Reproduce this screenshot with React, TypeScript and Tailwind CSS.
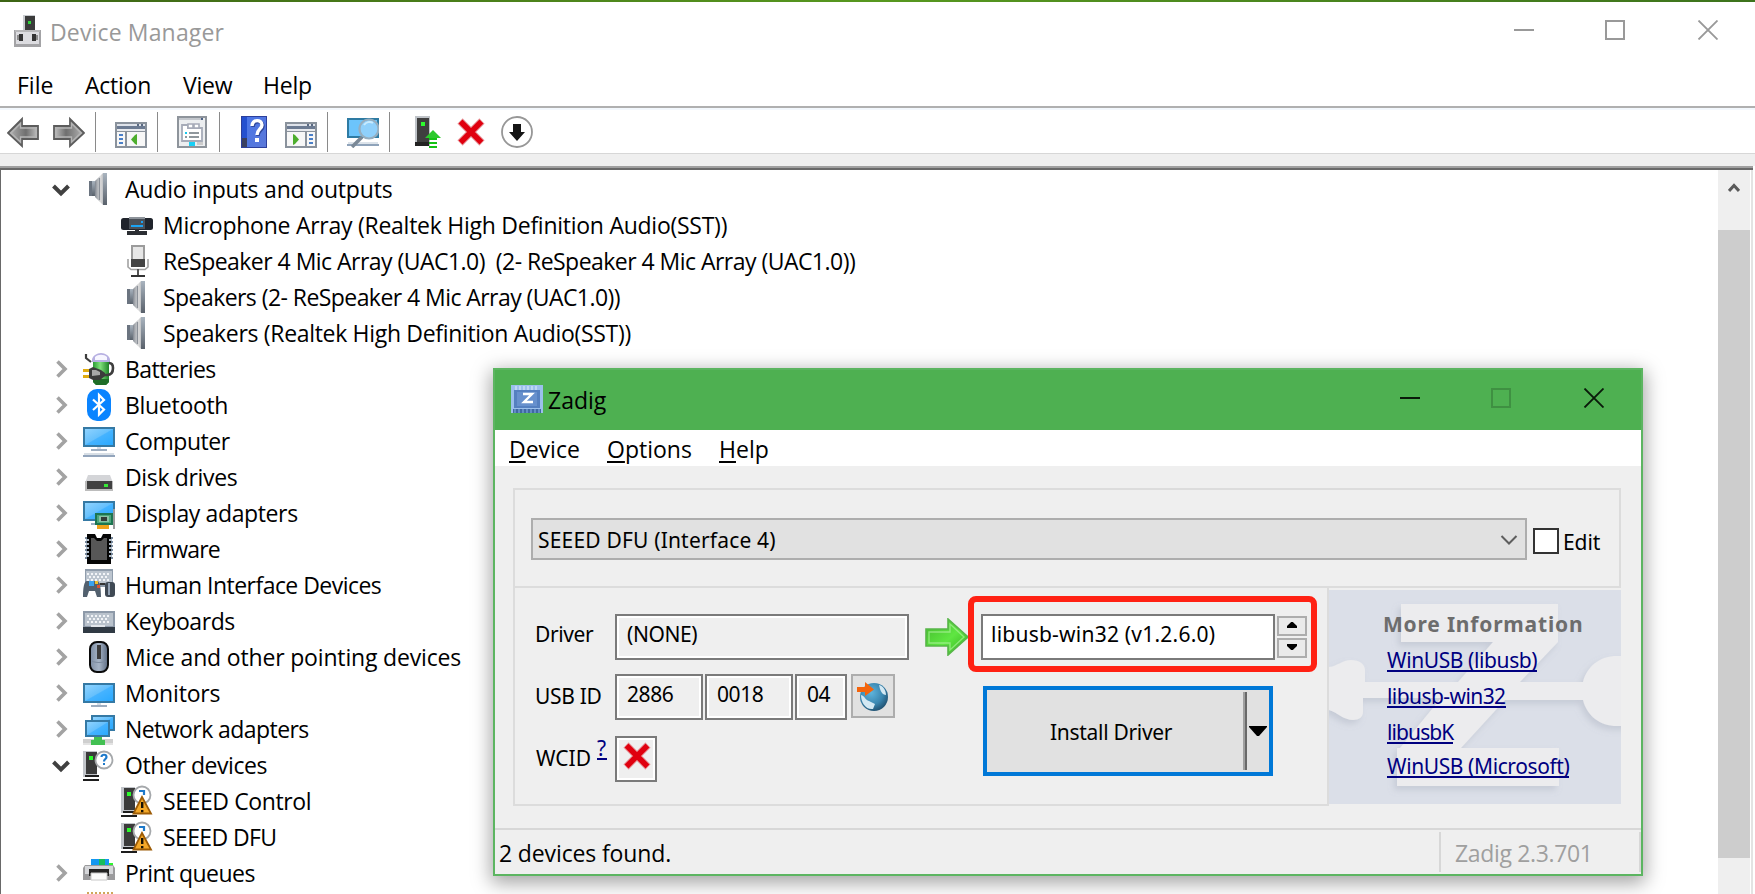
import type { ReactNode } from "react";

const Svg = ({ children, className = "h-8 w-8", box = "0 0 32 32" }: { children: ReactNode; className?: string; box?: string }) => (
  <svg viewBox={box} className={`block shrink-0 ${className}`}>{children}</svg>
);

const Defs = () => (
  <svg className="absolute h-0 w-0">
    <defs>
      <linearGradient id="screen" x1="0" y1="0" x2="1" y2="1">
        <stop offset="0" stopColor="#8fd3ff" /><stop offset=".48" stopColor="#66c0fc" /><stop offset=".52" stopColor="#45b3ff" /><stop offset="1" stopColor="#2aa9ff" />
      </linearGradient>
      <linearGradient id="gray" x1="0" y1="0" x2="1" y2="0">
        <stop offset="0" stopColor="#b5b5b5" /><stop offset=".6" stopColor="#6f6f6f" /><stop offset="1" stopColor="#c4c4c4" />
      </linearGradient>
      <linearGradient id="cone" x1="0" y1="0" x2="1" y2="0">
        <stop offset="0" stopColor="#8b9199" /><stop offset=".55" stopColor="#dcdcdc" /><stop offset="1" stopColor="#a9adb2" />
      </linearGradient>
      <linearGradient id="cap" x1="0" y1="0" x2="0" y2="1">
        <stop offset="0" stopColor="#a9b4bf" /><stop offset="1" stopColor="#59616b" />
      </linearGradient>
      <linearGradient id="help" x1="0" y1="0" x2="1" y2="1">
        <stop offset="0" stopColor="#4a76e8" /><stop offset="1" stopColor="#5b78d8" />
      </linearGradient>
      <linearGradient id="mouse" x1="0" y1="0" x2="1" y2="0">
        <stop offset="0" stopColor="#7d8da3" /><stop offset=".5" stopColor="#a6b4c6" /><stop offset="1" stopColor="#5b6a80" />
      </linearGradient>
      <linearGradient id="greenArrow" x1="0" y1="0" x2="1" y2="1">
        <stop offset="0" stopColor="#42b82b" /><stop offset=".55" stopColor="#5fe642" /><stop offset="1" stopColor="#2fae1a" />
      </linearGradient>
      <linearGradient id="battery" x1="0" y1="0" x2="1" y2="0">
        <stop offset="0" stopColor="#2c9c35" /><stop offset=".45" stopColor="#7fe07a" /><stop offset="1" stopColor="#1d8327" />
      </linearGradient>
      <radialGradient id="globe" cx=".4" cy=".35" r=".7">
        <stop offset="0" stopColor="#5fb4dc" /><stop offset=".6" stopColor="#3a86b0" /><stop offset="1" stopColor="#1f4d6c" />
      </radialGradient>
    </defs>
  </svg>
);

const RedX = ({ className = "h-8 w-8" }: { className?: string }) => (
  <Svg className={className}>
    <path d="M5 5 27 27M27 5 5 27" stroke="#e7a0a4" strokeWidth="7.5" />
    <path d="M5.5 5.5 26.5 26.5M26.5 5.5 5.5 26.5" stroke="#e0000f" strokeWidth="5.6" />
  </Svg>
);

const DeviceManagerIcon = () => (
  <Svg>
    <path d="M12 0h12v15H12z" fill="#c9ccd0" /><path d="M14 1h10v14H14z" fill="#3b3b3b" /><path d="M17 6h3v3h-3z" fill="#2fd33a" />
    <path d="M3 15h27v17H3z" fill="#a3a3a6" /><path d="M5 17h23v12H5z" fill="#dcdce0" /><path d="M4 15h25v2H4z" fill="#b7b7b9" />
    <path d="M8 19h4v7H8zM21 19h4v7h-4z" fill="#333" /><path d="M6 20h2v5H6zM25 20h2v5h-2z" fill="#8c8c8c" />
  </Svg>
);

const ArrowIcon = ({ flip = false }: { flip?: boolean }) => (
  <Svg>
    <g transform={flip ? "translate(32 0) scale(-1 1)" : undefined}>
      <path d="M1 17 15 3v7h16v13H15v7Z" fill="url(#gray)" stroke="#5c5c5c" strokeWidth="1.8" />
      <path d="M4 17 13.500 7.500V12H29v9H13.500v5Z" fill="none" stroke="#b4b4b4" strokeWidth="1.400" />
    </g>
  </Svg>
);

const PaneIcon = ({ right = false }: { right?: boolean }) => (
  <Svg>
    <path d="M0 6h32v26H0z" fill="#8a929c" /><path d="M2 8h28v2H2z" fill="#dfe3ea" /><path d="M2 10h28v3H2z" fill="#6c7b92" />
    <path d="M22 8h2v2h-2zM26 8h2v2h-2z" fill="#5a6a82" /><path d="M2 13h28v3H2z" fill="#e8eaee" /><path d="M2 16h28v14H2z" fill="#f7f7f7" />
    {right ? (
      <>
        <path d="M20 15h2v15h-2z" fill="#8a929c" /><path d="M2 15h28v1H2z" fill="#8a929c" />
        <path d="M24 18h4v2h-4zM24 22h4v2h-4zM24 26h4v2h-4z" fill="#4a7fc8" /><path d="M8 18v11l2-1 4-4.500-4-4.500Z" fill="#4dae2e" />
      </>
    ) : (
      <>
        <path d="M10 15h2v15h-2z" fill="#8a929c" /><path d="M2 15h28v1H2z" fill="#8a929c" />
        <path d="M4 18h4v2H4zM4 22h4v2H4zM4 26h4v2H4z" fill="#4a7fc8" /><path d="M22 18v11l-2-1-4-4.500 4-4.500Z" fill="#4dae2e" />
      </>
    )}
  </Svg>
);

const PropertiesIcon = () => (
  <Svg>
    <path d="M1 0h30v32H1z" fill="#8e949b" /><path d="M3 2h26v28H3z" fill="#eceef0" /><path d="M3 2h22v2H3z" fill="#c3c7cd" /><path d="M25 2h2v2h-2z" fill="#4d6286" />
    <path d="M6 9h6v3h14v13H6z" fill="#fff" stroke="#a6abb8" strokeWidth="1.8" /><path d="M12 8h5v4h-5zM18 8h5v4h-5z" fill="#fff" stroke="#a6abb8" strokeWidth="1.6" />
    <path d="M9 16h2v2H9z" fill="#15c8ee" /><path d="M9 20h2v2H9z" fill="#8f979c" /><path d="M13 16h10v2H13zM13 20h10v2H13z" fill="#8f979c" />
    <path d="M13 26h6v4h-6z" fill="#19cff5" /><path d="M21 26h6v3h-6z" fill="#ccc" />
  </Svg>
);

const HelpIcon = () => (
  <Svg>
    <path d="M3 0h26v32H3z" fill="#2c3f9c" /><path d="M9 1h19v30H9z" fill="url(#help)" /><path d="M4 1h5v21H4z" fill="#2450cf" /><path d="M4 22h5v9H4z" fill="#3a4060" />
    <path d="M14 10c0-7 10-7 10-1 0 4-5 4-5 10" fill="none" stroke="#30489c" strokeWidth="3.600" transform="translate(1 1)" />
    <path d="M14 10c0-7 10-7 10-1 0 4-5 4-5 10" fill="none" stroke="#fff" strokeWidth="3.400" /><path d="M17 22h4v4h-4z" fill="#fff" />
  </Svg>
);

const ScanIcon = () => (
  <Svg>
    <path d="M0 2h32v20H0z" fill="#2e7ba3" /><path d="M2 4h28v16H2z" fill="#6cc4fb" /><path d="M0 28h32v2H0z" fill="#8fa3ba" /><path d="M1 26h30v2H1z" fill="#dce3ea" />
    <path d="M15 21 5 31" stroke="#7a8896" strokeWidth="3.500" /><circle cx="22" cy="13" r="9.500" fill="#8fd0fb" stroke="#96aebf" strokeWidth="2.200" /><path d="M17 9c2-3 6-4 9-2" stroke="#c9ebff" strokeWidth="2" fill="none" />
  </Svg>
);

const UpdateIcon = () => (
  <Svg>
    <path d="M6 0h15v30H6z" fill="#bfc3c8" /><path d="M8 2h12v24H8z" fill="#3f3f3f" /><path d="M6 26h14v4H6z" fill="#222" /><path d="M12 6h4v4h-4z" fill="#2dfb2d" />
    <path d="M16 22 24 14l8 8h-4v2h-8v-2Z" fill="#2bc92b" /><path d="M20 22h8v2h-8zM20 26h8v2h-8zM20 30h8v2h-8z" fill="#14c314" />
  </Svg>
);

const DisableIcon = () => (
  <Svg>
    <circle cx="16" cy="16" r="15" fill="#fff" stroke="#979797" strokeWidth="1.800" /><path d="M12 8h8v8h4l-8 9-8-9h4Z" fill="#151515" />
  </Svg>
);

const SpeakerIcon = () => (
  <Svg>
    <path d="M6 8h6v15H6z" fill="url(#cap)" /><path d="M12 8 20 0h2v32h-2l-8-8Z" fill="url(#cone)" /><path d="M20 0h4v32h-4z" fill="url(#cap)" />
    <path d="M12.500 9v14M16.500 5v22" stroke="#8b9098" strokeWidth="1.200" /><path d="M6 8h3v15H6z" fill="#6b7480" />
  </Svg>
);
const MicArrayIcon = () => (
  <Svg>
    <rect x="0" y="9" width="32" height="12" rx="2.500" fill="#20242c" /><path d="M8 8h16v12H8z" fill="#4a5058" /><path d="M8 8h16v2H8z" fill="#8d939a" />
    <path d="M10 16h12v2H10z" fill="#1ba4f5" /><path d="M20 12h2v2h-2z" fill="#1ba4f5" /><path d="M14 20h4v3h-4zM6 22h20v4H6z" fill="#2b2e33" />
  </Svg>
);
const MicIcon = () => (
  <Svg>
    <path d="M10 0h14v16H10z" fill="#9b9b9b" /><path d="M12 2h10v13H12z" fill="#e6e6e6" /><path d="M10 14h14v8H10z" fill="#444" />
    <path d="M7 14v8l3 2.500h14l3-2.500v-8" fill="none" stroke="#a2a2a2" strokeWidth="1.600" /><path d="M16 24h2v6h-2z" fill="#555" /><path d="M10 30h14v2H10z" fill="#333" />
  </Svg>
);
const BatteryIcon = () => (
  <Svg>
    <path d="M10 8h16v21l-3 3H13l-3-3z" fill="url(#battery)" /><path d="M10 26h16v3l-3 3H13l-3-3z" fill="#1f6d27" /><path d="M9 7c0-4 5-7 9-7s9 3 9 7v2H9z" fill="#b7b0e2" /><path d="M12 4c3-3 9-3 12 0v3H12z" fill="#f7f6ff" />
    <path d="M3 1v4l5 4" fill="none" stroke="#3e3e3e" strokeWidth="2.200" /><path d="M20 22h4c4 0 6-3 6-7s-2-5-4-5" fill="none" stroke="#3e3e3e" strokeWidth="2.600" />
    <path d="M0 16h7v3H0zM0 22h7v3H0z" fill="#e0ac10" /><path d="M6 16l4-2 8 3 4 3v3l-5 4H10l-4-2z" fill="#3c3c3c" /><path d="M9 17h4l4 2v3l-8 1z" fill="#a8a8a8" />
  </Svg>
);
const BluetoothIcon = () => (
  <Svg>
    <rect x="4" y="0" width="24" height="32" rx="10" fill="#0a84ff" /><path d="m10 10.500 11 10-5 5V6l5 5-11 10" fill="none" stroke="#fff" strokeWidth="2.200" />
  </Svg>
);
const ComputerIcon = () => (
  <Svg>
    <path d="M0 2h32v20H0z" fill="#3579a4" /><path d="M2 4h28v16H2z" fill="url(#screen)" /><path d="M14 22h4v2h-4z" fill="#d5dce5" /><path d="M8 24h16v2H8z" fill="#9dadc0" />
    <path d="M0 30h32v2H0z" fill="#93a5bc" /><path d="M1 28h30v2H1z" fill="#d8dfe6" />
  </Svg>
);
const DiskIcon = () => (
  <Svg>
    <path d="M5 14h22l3 8H2z" fill="#d4d5d8" /><path d="M2 20h28v10H2z" fill="#bcbcbc" /><path d="M4 20h25v8H4z" fill="#414141" /><path d="M21 23h4v3h-4z" fill="#36ea36" />
  </Svg>
);
const DisplayIcon = () => (
  <Svg>
    <path d="M0 4h32v20H0z" fill="#3579a4" /><path d="M2 6h28v16H2z" fill="url(#screen)" /><path d="M8 26h6v2H8z" fill="#9dadc0" />
    <path d="M12 16h18v12H12z" fill="#1d7551" /><path d="M14 18h14v8H14z" fill="#4ba67c" /><path d="M16 19h10v6H16z" fill="#89c2a5" /><path d="M18 20h6v4h-6z" fill="#333c38" />
    <path d="M14 28h12v4H14z" fill="#f0a21a" /><path d="M30 12h2v20h-2z" fill="#9b9b9b" />
  </Svg>
);
const FirmwareIcon = () => (
  <Svg>
    <path d="M4 4v24M28 4v24" stroke="#76889c" strokeWidth="4" strokeDasharray="2 2" /><path d="M4 1h8l2 4h4l2-4h8v30H4z" fill="#050505" />
    <path d="M3 6h3v2H3zM3 10h3v2H3zM3 14h3v2H3zM3 18h3v2H3zM3 22h3v2H3zM26 6h3v2h-3zM26 10h3v2h-3zM26 14h3v2h-3zM26 18h3v2h-3zM26 22h3v2h-3z" fill="#aebbc8" /><path d="M8 5h3l3 3h4l3-3h3v22H8z" fill="#575757" />
  </Svg>
);
const Keys = ({ y }: { y: number }) => (
  <g stroke="#f2f4f7" strokeWidth="2" strokeDasharray="2 2"><path d={`M4 ${y}h24M6 ${y + 3}h20M4 ${y + 6}h24`} /></g>
);
const HidIcon = () => (
  <Svg>
    <path d="M2 0h28v18H2z" fill="#8f9cab" /><path d="M3 2h26v12H3z" fill="#bcc5cf" /><Keys y={5} />
    <path d="M0 28c0-9 1-16 4-16h10c3 0 4 7 4 16h-4l-2-6H6l-2 6z" fill="#52606e" /><path d="M6 12h5v5H6z" fill="#3aa2ee" /><path d="M12 12h3v3h-3z" fill="#f0c02c" /><path d="M14 16h3v3h-3z" fill="#dc5130" />
    <rect x="22" y="13" width="10" height="15" rx="3" fill="#3f4954" /><path d="M25 14h2v12h-2z" fill="#93a2b4" /><path d="M17 14h5v2h-5z" fill="#333" />
  </Svg>
);
const KeyboardIcon = () => (
  <Svg>
    <path d="M0 6h32v18H0z" fill="#8e9aa9" /><path d="M2 8h28v13H2z" fill="#b9c2cc" /><Keys y={11} /><path d="M0 22h32v6H0z" fill="#303a44" /><path d="M8 20h14v2H8z" fill="#e1e5ea" />
  </Svg>
);
const MouseIcon = () => (
  <Svg>
    <rect x="7" y="1" width="18" height="30" rx="7" fill="url(#mouse)" stroke="#0a0a0a" strokeWidth="2" /><path d="M14 4h4v14h-4z" fill="#3c3c3c" /><path d="M9 20c3 2 11 2 14 0" stroke="#7b8a9e" fill="none" />
  </Svg>
);
const MonitorIcon = () => (
  <Svg>
    <path d="M0 6h32v20H0z" fill="#3579a4" /><path d="M2 8h28v16H2z" fill="url(#screen)" /><path d="M14 26h4v2h-4z" fill="#d5dce5" /><path d="M8 28h16v2H8z" fill="#9dadc0" />
  </Svg>
);
const NetworkIcon = () => (
  <Svg>
    <path d="M8 2h24v16H8z" fill="#3579a4" /><path d="M10 4h20v12H10z" fill="url(#screen)" /><path d="M2 7h25v17H2z" fill="#3579a4" /><path d="M4 9h21v13H4z" fill="url(#screen)" />
    <path d="M0 26h30v4H0z" fill="#cfcfcf" /><path d="M0 30h30v2H0z" fill="#e3e3e3" /><path d="M11 24h8v3h3v5H8v-5h3z" fill="#42c052" />
  </Svg>
);
const Tower = () => (
  <>
    <path d="M0 2h14v26H0z" fill="#c1c4c9" /><path d="M3 3h11v22H3z" fill="#3b3b3b" /><path d="M2 26h14v2H2zM0 30h16v2H0z" fill="#1d1d1d" /><path d="M6 7h4v4H6z" fill="#2bfb2b" />
  </>
);
const OtherIcon = () => (
  <Svg>
    <Tower /><circle cx="21" cy="11" r="8.500" fill="#fff" stroke="#a5a8ab" strokeWidth="1.800" />
    <path d="M18.500 8c0-3 5-3 5 0 0 2-2.500 2-2.500 4.500" fill="none" stroke="#1d79ca" strokeWidth="2.200" /><path d="M20 14h2v2h-2z" fill="#1d79ca" />
  </Svg>
);
const WarnIcon = () => (
  <Svg>
    <Tower /><circle cx="21" cy="10" r="8.500" fill="#fff" stroke="#a5a8ab" strokeWidth="1.800" /><path d="M18 6h5v4" fill="none" stroke="#1d79ca" strokeWidth="2.200" />
    <path d="M21 12 30 28.500H12.500Z" fill="#f3a829" stroke="#9d5c06" strokeWidth="1.800" /><path d="M20 17h2.400v6H20zM20 25h2.400v2.200H20z" fill="#171105" />
  </Svg>
);
const PrinterIcon = () => (
  <Svg>
    <path d="M8 2h18v6H8z" fill="#1497f0" /><path d="M16 2h6v6h-6z" fill="#17bd5b" /><path d="M2 8h28l2 3v12H0V11z" fill="#9b9b9d" /><path d="M2 9h28v8H2z" fill="#d5d6d9" /><path d="M26 6h4v2h-4z" fill="#2ef52e" />
    <path d="M6 12h20v7H6z" fill="#232323" /><path d="M8 16h16v7H8z" fill="#fbfbfb" stroke="#c8c8c8" />
  </Svg>
);

const ZadigIcon = () => (
  <Svg className="h-[30px] w-8" box="0 0 32 30">
    <path d="M0 0h32v28H0z" fill="#9cc0ec" /><path d="M5 1v4M9 1v4M13 1v4M17 1v4M21 1v4M25 1v4" stroke="#c9dcf4" strokeWidth="1.600" /><path d="M3 5h26v18H3z" fill="#5580c0" /><path d="M6 7h20v14H6z" fill="#6790cd" />
    <path d="M2 24h28v4H2z" fill="#3f68a2" /><path d="M4 24v4M8 24v4M12 24v4M16 24v4M20 24v4M24 24v4M28 24v4" stroke="#6b94cc" strokeWidth="1.600" />
    <path d="M12 9h9L13 17h9" fill="none" stroke="#fff" strokeWidth="2.400" />
  </Svg>
);

const Expander = ({ open }: { open?: boolean }) =>
  open ? (
    <Svg className="mt-[2px] h-4 w-[18px]" box="0 0 18 16"><path d="m1.500 4 7.500 7.500L16.500 4" fill="none" stroke="#404040" strokeWidth="4" /></Svg>
  ) : (
    <Svg className="h-[18px] w-[18px]" box="0 0 18 18"><path d="m5.500 1.500 7.500 7.500-7.500 7.500" fill="none" stroke="#a3a3a3" strokeWidth="3.600" /></Svg>
  );

type Item = { label: string; icon: ReactNode; fit: string; open?: boolean; child?: boolean };
const items: Item[] = [
  { label: "Audio inputs and outputs", icon: <SpeakerIcon />, open: true, fit: "tracking-[-0.19px]" },
  { label: "Microphone Array (Realtek High Definition Audio(SST))", icon: <MicArrayIcon />, child: true, fit: "tracking-[-0.26px]" },
  { label: "ReSpeaker 4 Mic Array (UAC1.0)  (2- ReSpeaker 4 Mic Array (UAC1.0))", icon: <MicIcon />, child: true, fit: "tracking-[-0.53px]" },
  { label: "Speakers (2- ReSpeaker 4 Mic Array (UAC1.0))", icon: <SpeakerIcon />, child: true, fit: "tracking-[-0.56px]" },
  { label: "Speakers (Realtek High Definition Audio(SST))", icon: <SpeakerIcon />, child: true, fit: "tracking-[-0.32px]" },
  { label: "Batteries", icon: <BatteryIcon />, fit: "tracking-[-0.6px]" },
  { label: "Bluetooth", icon: <BluetoothIcon />, fit: "tracking-[-0.3px]" },
  { label: "Computer", icon: <ComputerIcon />, fit: "tracking-[-0.45px]" },
  { label: "Disk drives", icon: <DiskIcon />, fit: "tracking-[-0.35px]" },
  { label: "Display adapters", icon: <DisplayIcon />, fit: "tracking-[-0.38px]" },
  { label: "Firmware", icon: <FirmwareIcon />, fit: "tracking-[-0.8px]" },
  { label: "Human Interface Devices", icon: <HidIcon />, fit: "tracking-[-0.53px]" },
  { label: "Keyboards", icon: <KeyboardIcon />, fit: "tracking-[-0.42px]" },
  { label: "Mice and other pointing devices", icon: <MouseIcon />, fit: "tracking-[-0.17px]" },
  { label: "Monitors", icon: <MonitorIcon />, fit: "tracking-[-0.2px]" },
  { label: "Network adapters", icon: <NetworkIcon />, fit: "tracking-[-0.56px]" },
  { label: "Other devices", icon: <OtherIcon />, open: true, fit: "tracking-[-0.43px]" },
  { label: "SEEED Control", icon: <WarnIcon />, child: true, fit: "tracking-[-0.4px]" },
  { label: "SEEED DFU", icon: <WarnIcon />, child: true, fit: "tracking-[-0.6px]" },
  { label: "Print queues", icon: <PrinterIcon />, fit: "tracking-[-0.55px]" },
];

const TreeRow = ({ item }: { item: Item }) => (
  <li className="flex h-9 shrink-0 items-center pl-[51px]">
    {item.child ? <span className="w-[69px]" /> : <span className="w-[31px]"><Expander open={item.open} /></span>}
    {item.icon}
    <span className={`mt-px whitespace-pre pl-[10px] ${item.fit}`}>{item.label}</span>
  </li>
);

const Separator = () => <span className="h-10 w-px bg-[#8a8a8a]" />;

const WindowButtons = ({ tone, boxTone }: { tone: string; boxTone: string }) => (
  <Svg className="h-5 w-[204px]" box="0 0 204 20">
    <path d="M0 10h20" stroke={tone} strokeWidth="2" />
    <rect x="92" y="1" width="18" height="18" fill="none" stroke={boxTone} strokeWidth="2" />
    <path d="m184.500.5 19 19m0-19-19 19" stroke={tone} strokeWidth="1.800" />
  </Svg>
);

const Field = ({ className, text, leading }: { className: string; text: string; leading: string }) => (
  <div className={`shrink-0 border-2 border-[#7a7a7a] pl-[10px] shadow-[inset_0_0_0_2px_white] ${leading} ${className}`}>{text}</div>
);

const Link = ({ children, className }: { children: string; className: string }) => (
  <a className={`ml-[58px] h-[26px] w-fit border-b-2 border-[#000080] leading-[28px] text-[#000080] ${className}`}>{children}</a>
);

const InfoPanel = () => (
  <div className="relative mt-[2px] h-[214px] w-[292px] overflow-hidden bg-[#dbdfe8]">
    <svg viewBox="0 0 292 214" className="absolute inset-0 h-full w-full">
      <defs>
        <filter id="soft" x="-10%" y="-10%" width="120%" height="130%"><feDropShadow dx="-3" dy="4" stdDeviation="3" floodColor="#8890a0" floodOpacity=".25" /></filter>
      </defs>
      <g fill="#ececee" filter="url(#soft)">
        <path d="M72 14h157v38L191 92h63c4-16 17-26 34-26h12v70h-12c-17 0-30-10-34-26h-78l-44 48h98v38H68v-38h3l41-50H34v14c0 5-4 8-10 8-9 0-15-7-24-10V77c9-1 13-7 22-7 8 0 14 4 14 10v12h93l35-40H72Z" />
      </g>
    </svg>
    <div className="relative flex flex-col">
      <h2 className="pl-[54px] pt-[19px] text-[21px] leading-[30px] font-bold tracking-[0.8px] text-[#6d6d6d]">More Information</h2>
      <Link className="mt-[7px]">WinUSB (libusb)</Link>
      <Link className="mt-[10px] tracking-[-0.57px]">libusb-win32</Link>
      <Link className="mt-[10px] tracking-[-0.9px]">libusbK</Link>
      <Link className="mt-2">WinUSB (Microsoft)</Link>
    </div>
  </div>
);

const Spin = ({ down = false }: { down?: boolean }) => (
  <button className="flex h-5 w-[30px] justify-center border-2 border-[#adadad] bg-[#eaeaea] pt-1">
    <Svg className="h-[6px] w-[10px]" box="0 0 10 6"><path d={down ? "M0 0h10v2L5.800 6H4.200L0 2Z" : "M0 6h10V4L5.800 0H4.200L0 4Z"} fill="#000" /></Svg>
  </button>
);

const Zadig = () => (
  <section className="absolute left-[493px] top-[368px] flex h-[508px] w-[1150px] flex-col border-2 border-[#5cb561] bg-[#efefef] shadow-[0_5px_18px_2px_rgba(0,0,0,0.36)]">
    <header className="flex h-[60px] shrink-0 items-start bg-[#4eb051] pl-4">
      <div className="pt-[15px]"><ZadigIcon /></div>
      <h1 className="grow pl-[5px] text-[23px] leading-[61px]">Zadig</h1>
      <div className="mr-[37px] mt-[18px]"><WindowButtons tone="#0a1a0a" boxTone="#3f9042" /></div>
    </header>
    <nav className="flex h-9 shrink-0 bg-white pl-[14px] text-[23px] leading-[38px]">
      <span className="w-[98px]"><u className="decoration-2 underline-offset-[3px]">D</u>evice</span>
      <span className="w-[112px]"><u className="decoration-2 underline-offset-[3px]">O</u>ptions</span>
      <span><u className="decoration-2 underline-offset-[3px]">H</u>elp</span>
    </nav>
    <main className="h-[362px] shrink-0 pl-[18px] pt-[22px] font-['Noto_Sans',sans-serif] text-[21px] tracking-[-0.4px]">
      <div className="flex h-[100px] w-[1108px] border-2 border-[#dcdcdc] pl-4 pt-7">
        <div className="flex h-[42px] w-[996px] justify-between border-2 border-[#adadad] bg-[#e1e1e1] pl-[5px] pr-[7px] leading-[40px] tracking-[0.18px]">
          SEEED DFU (Interface 4)
          <Svg className="mt-[15px] h-[10px] w-[18px]" box="0 0 18 10"><path d="m1.500 1 7.500 7.500L16.500 1" fill="none" stroke="#5e5e5e" strokeWidth="2" /></Svg>
        </div>
        <span className="ml-[6px] mt-[10px] h-[26px] w-[26px] border-2 border-[#333] bg-white" />
        <span className="pl-1 leading-[48px] tracking-[-0.1px]">Edit</span>
      </div>
      <div className="flex">
        <div className="flex h-[218px] w-[816px] border-x-2 border-b-2 border-[#dcdcdc] pt-[26px]">
          <div className="flex w-[466px] shrink-0 flex-col">
            <div className="flex h-[46px] pl-5">
              <span className="w-20 shrink-0 leading-[40px]">Driver</span>
              <Field className="w-[294px]" leading="leading-[36px]" text="(NONE)" />
              <Svg className="ml-4 mt-1 h-[38px] w-11" box="0 0 44 38">
                <path d="M1 11h22V1l20 18-20 18V28H1Z" fill="url(#greenArrow)" stroke="#58b549" strokeWidth="1.600" /><path d="M4 14h21V6l14 13-14 13v-7H4Z" fill="none" stroke="#b5f5a6" strokeWidth="1.400" opacity=".6" />
              </Svg>
            </div>
            <div className="mt-[14px] flex h-[46px] gap-[2px] pl-5">
              <span className="w-[78px] shrink-0 leading-[44px] tracking-[-0.3px]">USB ID</span>
              <Field className="w-[88px]" leading="leading-[36px]" text="2886" />
              <Field className="w-[88px]" leading="leading-[36px]" text="0018" />
              <Field className="w-[52px]" leading="leading-[36px]" text="04" />
              <button className="ml-[2px] flex h-11 w-11 items-center justify-center border-2 border-[#adadad] bg-[#e1e1e1]">
                <Svg>
                  <circle cx="17" cy="17" r="14" fill="url(#globe)" /><path d="M4 15c4 1 4 5 8 6l6 3-2 5c-7 1-12-6-12-14ZM22 5c4 1 7 5 7 10-3 0-5-3-6-6Z" fill="#d3e8f3" />
                  <path d="M0 7h8V2l9 7.500L8 16v-4H0Z" fill="#f4640c" />
                </Svg>
              </button>
            </div>
            <div className="mt-4 flex h-[46px] pl-[21px]">
              <span className="w-[61px] shrink-0 leading-[44px] tracking-[0px]">WCID</span>
              <span className="h-6 w-[10px] border-b-2 border-[#000080] leading-[24px] text-[#000080]">?</span>
              <div className="ml-2 w-[42px] border-2 border-[#7a7a7a] pl-1 pt-[2px] shadow-[inset_0_0_0_2px_white]"><RedX /></div>
            </div>
          </div>
          <div className="relative flex w-[326px] flex-col">
            <div className="absolute -left-[13px] -top-[18px] h-[76px] w-[349px] rounded-lg border-[6px] border-[#ff2113]" />
            <div className="flex gap-[2px]">
              <div className="h-[46px] w-[294px] border-2 border-[#7a7a7a] bg-white pl-2 leading-[37px] tracking-[0.23px]">libusb-win32 (v1.2.6.0)</div>
              <div className="flex flex-col gap-[2px] pt-[2px]"><Spin /><Spin down /></div>
            </div>
            <button className="ml-[2px] mt-[26px] flex h-[90px] w-[290px] border-4 border-[#0078d7] bg-[#e1e1e1]">
              <span className="w-[256px] pl-[63px] text-left leading-[84px] tracking-[-0.3px]">Install Driver</span>
              <span className="mt-[2px] h-[78px] w-1 border-l-2 border-r-2 border-l-[#a0a0a0] border-r-[#696969]" />
              <Svg className="ml-[2px] mt-9 h-[10px] w-[18px]" box="0 0 18 10"><path d="M0 0h18v1L10 10H8L0 1Z" fill="#000" /></Svg>
            </button>
          </div>
        </div>
        <InfoPanel />
      </div>
    </main>
    <footer className="flex h-[46px] shrink-0 border-t-2 border-[#d7d7d7] pl-1 text-[23px] leading-[46px]">
      <span className="w-[940px] shrink-0 tracking-[-0.13px]">2 devices found.</span>
      <span className="mt-[2px] h-10 w-[202px] border-x-2 border-[#d7d7d7] pl-[14px] leading-[42px] tracking-[-0.35px] text-[#9f9f9f]">Zadig 2.3.701</span>
    </footer>
  </section>
);

export default function App() {
  return (
    <div className="relative flex h-[894px] w-[1755px] flex-col overflow-hidden bg-white font-['Open_Sans',sans-serif] text-[23px] text-black">
      <Defs />
      <div className="h-[2px] shrink-0 bg-linear-to-r from-[#3c6414] via-[#57981f] to-[#3d731c]" />
      <header className="flex h-[66px] shrink-0 items-start pl-[11px]">
        <div className="mt-[13px]"><DeviceManagerIcon /></div>
        <h1 className="grow pl-[7px] leading-[61px] tracking-[0.15px] text-[#999]">Device Manager</h1>
        <div className="mr-[37px] mt-[18px]"><WindowButtons tone="#999" boxTone="#999" /></div>
      </header>
      <nav className="flex h-[38px] shrink-0 pl-[17px] leading-[34px]">
        <span className="w-[68px]">File</span>
        <span className="w-[98px] tracking-[-0.25px]">Action</span>
        <span className="w-[80px] tracking-[-0.2px]">View</span>
        <span className="tracking-[-0.2px]">Help</span>
      </nav>
      <div className="h-1 shrink-0 border-t-2 border-[#b0b0b0] bg-[#f3f8fd]" />
      <div className="flex h-[44px] shrink-0 items-start border-b border-[#d7d7d7] pl-[7px] pt-[2px]">
        <div className="flex h-10 items-center">
          <div className="flex w-[88px] gap-[14px]"><ArrowIcon /><ArrowIcon flip /></div>
          <Separator />
          <div className="w-[61px] pl-[19px]"><PaneIcon /></div>
          <Separator />
          <div className="w-[61px] pl-[18px]"><PropertiesIcon /></div>
          <Separator />
          <div className="flex w-[107px] gap-[15px] pl-[18px]"><HelpIcon /><PaneIcon right /></div>
          <Separator />
          <div className="w-[61px] pl-[19px]"><ScanIcon /></div>
          <Separator />
          <div className="flex gap-[14px] pl-[19px]"><UpdateIcon /><RedX /><DisableIcon /></div>
        </div>
      </div>
      <div className="h-3 shrink-0 bg-[#efefef]" />
      <div className="mr-[2px] flex h-[728px] shrink-0 border-t-2 border-[#a0a0a0]">
        <div className="flex w-full border-t-2 border-l border-[#696969]">
          <ul className="flex w-[1717px] shrink-0 flex-col overflow-hidden pt-px">
            {items.map((item) => <TreeRow key={item.label} item={item} />)}
            <li className="ml-[86px] mt-px h-[2px] w-[26px] shrink-0 bg-[repeating-linear-gradient(to_right,#d0a65a_0_2px,white_2px_4px)]" />
          </ul>
          <div className="flex w-8 shrink-0 flex-col bg-[#efefef]">
            <div className="flex h-[60px] shrink-0 justify-center pr-px pt-[13px]">
              <Svg className="h-[11px] w-3" box="0 0 12 11"><path d="m1 8 5-5.500L11 8" fill="none" stroke="#5a5a5a" strokeWidth="3" /></Svg>
            </div>
            <div className="h-[628px] shrink-0 bg-[#cdcdcd]" />
          </div>
          <div className="ml-px w-[2px] bg-[#e3e3e3]" />
        </div>
      </div>
      <Zadig />
    </div>
  );
}
